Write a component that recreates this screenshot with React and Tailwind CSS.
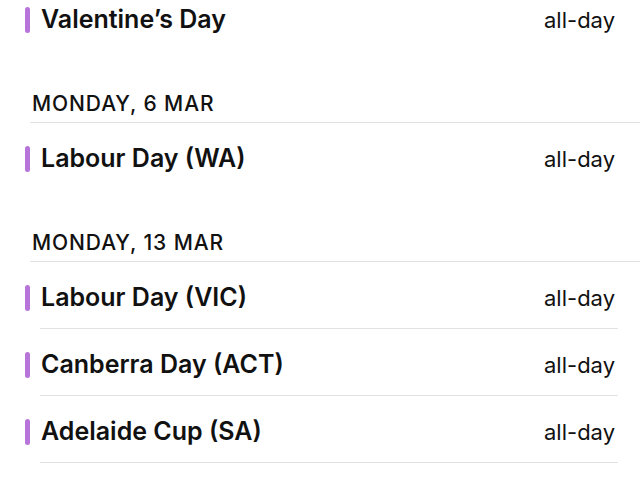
import React from 'react';

const sections = [
  { title: null, events: ['Valentine’s Day'] },
  { title: 'MONDAY, 6 MAR', events: ['Labour Day (WA)'] },
  { title: 'MONDAY, 13 MAR', events: ['Labour Day (VIC)', 'Canberra Day (ACT)', 'Adelaide Cup (SA)'] },
];

const EventRow = ({ name, divider }) => (
  <div className="relative">
    <div className="flex h-[66px] items-center pl-[25px] pr-[25px] pt-[6px]">
      <span className="h-[26px] w-[5px] rounded-full bg-[#b775da]" />
      <span className="ml-[11px] flex-1 text-[25px] font-semibold text-[#111]">{name}</span>
      <span className="text-[22px] text-[#111]">all-day</span>
    </div>
    {divider && <div className="ml-[40px] mr-[22px] h-px bg-[#e2e2e2]" />}
  </div>
);

export default function App() {
  return (
    <div className="h-[480px] w-[640px] overflow-hidden bg-white" style={{ fontFamily: 'Inter, "Noto Sans", sans-serif' }}>
      <div className="-mt-[16px]">
        {sections.map((section, i) => (
          <div key={i}>
            {section.title && (
              <div>
                <div className="flex h-[72px] items-end pb-[8px] pl-[32px]">
                  <span className="text-[21px] font-medium leading-none tracking-[0.9px] text-[#111]">{section.title}</span>
                </div>
                <div className="ml-[30px] h-px bg-[#e2e2e2]" />
              </div>
            )}
            {section.events.map((name) => (
              <EventRow key={name} name={name} divider={section.events.length > 1} />
            ))}
          </div>
        ))}
      </div>
    </div>
  );
}
